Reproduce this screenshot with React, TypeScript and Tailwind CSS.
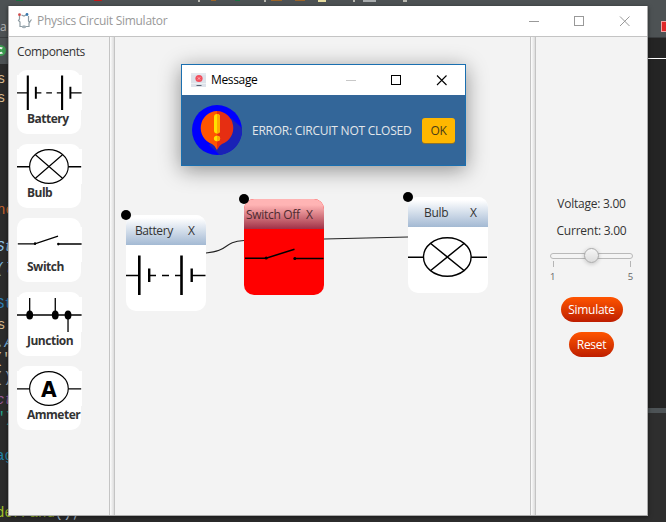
import React from "react";
import clsx from "clsx";

type Kind = "battery" | "bulb" | "switch" | "junction" | "ammeter";

/* Schematic symbol on an 80x40 grid, stretched to the size of its box. */
function Schematic({ kind, className }: { kind: Kind; className?: string }) {
  return (
    <svg
      viewBox="0 0 80 40"
      preserveAspectRatio="none"
      className={clsx("block shrink-0", className)}
      fill="none"
      stroke="#000"
      strokeWidth={1.4}
    >
      {kind === "battery" && (
        <>
          <path d="M0 20.5H12.5M23 20.5H30M36 20.5H43M49 20.5H55M66 20.5H79.5" />
          <path d="M13.3 .5V40M55.5 .5V40" strokeWidth={2.6} />
          <path d="M23.2 13.5V27M65.7 13.5V27" strokeWidth={2.4} />
        </>
      )}
      {kind === "bulb" && (
        <>
          <ellipse cx="39.3" cy="20" rx="23.8" ry="19.3" />
          <path d="M0 20.3H15.5M63.1 20.3H79M22.7 6.5L56 33.5M56 6.5L22.7 33.5" strokeWidth={1.5} />
        </>
      )}
      {kind === "switch" && (
        <>
          <path d="M1 19.2H22L50.5 10.3M50.5 19.4H79.5" strokeWidth={1.5} />
          <circle cx="22.2" cy="19" r="1.5" fill="#000" stroke="none" />
          <circle cx="50.8" cy="19.5" r="1.5" fill="#000" stroke="none" />
        </>
      )}
      {kind === "junction" && (
        <>
          <path d="M0 20.5H79.5" strokeWidth={1.8} />
          <path d="M15.6 1V20M47.1 1V20M62.8 20V40" strokeWidth={1.6} />
          <g fill="#000" stroke="none">
            <ellipse cx="15.6" cy="20.5" rx="4.2" ry="5.2" />
            <ellipse cx="47.1" cy="20.5" rx="4.2" ry="5.2" />
            <ellipse cx="62.8" cy="20.5" rx="4.2" ry="5.2" />
          </g>
        </>
      )}
      {kind === "ammeter" && (
        <>
          <ellipse cx="39.3" cy="20" rx="23.8" ry="19.3" />
          <path d="M0 20.3H15.5M63.1 20.3H79" />
          <text
            x="39.3"
            y="29.3"
            textAnchor="middle"
            fill="#000"
            stroke="none"
            fontSize="25"
            fontWeight="700"
            fontFamily="DejaVu Sans, sans-serif"
          >
            A
          </text>
        </>
      )}
    </svg>
  );
}

const palette: { kind: Kind; label: string }[] = [
  { kind: "battery", label: "Battery" },
  { kind: "bulb", label: "Bulb" },
  { kind: "switch", label: "Switch" },
  { kind: "junction", label: "Junction" },
  { kind: "ammeter", label: "Ammeter" },
];

function PaletteCard({ kind, label }: { kind: Kind; label: string }) {
  return (
    <div className="h-16 w-16 rounded-[10px] bg-white">
      <div className={clsx("w-[65px]", kind === "switch" ? "pt-[9px]" : "pt-[5px]")}>
        <Schematic kind={kind} className="h-[35px] w-[65px] bg-white" />
      </div>
      <div
        className={clsx(
          "pl-2.5 text-[12px] leading-4 font-bold tracking-[-0.5px] text-[#333]",
          kind === "switch" ? "-mt-[3px]" : "mt-px"
        )}
      >
        {label}
      </div>
    </div>
  );
}

function Divider() {
  return (
    <div className="w-1.5 shrink-0 border-x border-[#c4c4c4] bg-linear-to-r from-[#fdfdfd] to-[#dcdcdc]" />
  );
}

interface NodeProps {
  kind: Kind;
  label: string;
  place: string;
  labelClass: string;
  off?: boolean;
}

/* A component placed on the circuit canvas, with its drag handle. */
function CircuitNode({ kind, label, place, labelClass, off }: NodeProps) {
  return (
    <div className={clsx("absolute h-24 w-20", place)}>
      <div className={clsx("h-full w-full overflow-hidden rounded-[10px]", off ? "bg-[#ff0000]" : "bg-white")}>
        <div
          className={clsx(
            "flex h-[30px] items-center bg-linear-to-b pt-0.5 text-[12px] tracking-[-0.3px]",
            off
              ? "from-[#ffb4b4] from-20% to-[#a03048] text-[#4d2a30]"
              : "from-white from-10% to-[#a3b9d3] text-[#333]"
          )}
        >
          <span className={labelClass}>{label}</span>
          <span>X</span>
        </div>
        <Schematic kind={kind} className="mt-2.5 h-10 w-20" />
      </div>
      <span className="absolute -top-[5px] -left-[5px] size-2.5 rounded-full bg-black" />
    </div>
  );
}

function AlertIcon() {
  return (
    <svg viewBox="0 0 50 50" className="size-[50px] shrink-0">
      <circle cx="25" cy="25" r="25" fill="#0000fe" />
      <path d="M39 13L50 23A25 25 0 0 1 28 50L17 40Z" fill="#1a22b5" />
      <path d="M25 6A17 17 0 0 0 20 39Q23 40.5 25 45Z" fill="#ff5500" />
      <path d="M25 6A17 17 0 0 1 30 39Q27 40.5 25 45Z" fill="#e62e12" />
      <rect x="22" y="9" width="6" height="19.5" rx="3" fill="#ffe000" />
      <path d="M25 9a3 3 0 0 1 3 3v13.500a3 3 0 0 1-3 3z" fill="#ffaa00" />
      <ellipse cx="25" cy="33.500" rx="3.100" ry="2.700" fill="#ffe000" />
      <path d="M25 30.800a3.100 2.700 0 0 1 0 5.400z" fill="#ffaa00" />
    </svg>
  );
}

function MessageDialog() {
  return (
    <div className="absolute top-16 left-[181px] flex h-[102px] w-[285px] flex-col border border-[#1a6fb0] bg-[#336699] shadow-[0_4px_20px_rgba(0,0,0,0.42)]">
      <div className="flex h-[30px] items-center bg-white pl-[9px]">
        <svg viewBox="0 0 15 14" className="-mt-px h-3.5 w-[15px]">
          <path d="M0 0H15V14H0Z" fill="#dde2ea" />
          <path d="M0 1H15M0 10.500H15" stroke="#edf0f4" />
          <circle cx="8" cy="5.500" r="3.600" fill="#f2505e" />
          <path d="M6.800 4.300L9.200 6.700M9.200 4.300L6.800 6.700" stroke="#ffc4c8" strokeWidth=".8" />
          <path d="M5.500 12.500H10.500" stroke="#596574" />
        </svg>
        <span className="ml-[5px] text-[12px] tracking-[-0.35px] text-black">Message</span>
        <svg viewBox="0 0 102 12" className="-mt-px mr-[17px] ml-auto h-3 w-[102px]" fill="none" stroke="#000">
          <path d="M0 6.500H10" stroke="#c8c8c8" />
          <rect x="45.500" y="1.500" width="9" height="9" />
          <path d="M91 1.500L100.500 11M100.500 1.500L91 11" strokeWidth="1.100" />
        </svg>
      </div>
      <div className="flex flex-1 items-center pl-2.5">
        <AlertIcon />
        <span className="mt-0.5 ml-2.5 w-[160px] text-[12px] tracking-[-0.24px] whitespace-nowrap text-[#e3e7ea]">
          ERROR: CIRCUIT NOT CLOSED
        </span>
        <button className="ml-2.5 h-[25px] w-[33px] rounded-[3px] bg-[#ffb700] pt-px text-[12px] tracking-[-0.3px] text-[#4a3c18] shadow-[0_1px_0_#8a7030]">
          OK
        </button>
      </div>
    </div>
  );
}

const codeScraps: { text: string; cls: string }[] = [
  { text: "s", cls: "top-[71px] -left-[3px] text-[#d9b98c]" },
  { text: "s", cls: "top-[90px] -left-[3px] text-[#d9b98c]" },
  { text: "ne", cls: "top-[202px] -left-[3px] text-[#c8622b]" },
  { text: "St", cls: "top-[239px] -left-[4px] italic text-[#8fc3e8]" },
  { text: "(l", cls: "top-[261px] -left-[4px] italic text-[#79b4dd]" },
  { text: "St", cls: "top-[296px] -left-[4px] text-[#2d7fb8]" },
  { text: "s", cls: "top-[317px] -left-[3px] text-[#d9b98c]" },
  { text: ".A", cls: "top-[335px] -left-[4px] italic text-[#79b4dd]" },
  { text: "(\"", cls: "top-[351px] -left-[5px] text-[#d9c9a8]" },
  { text: "()", cls: "top-[370px] -left-[5px] text-[#a9b7c6]" },
  { text: "ct", cls: "top-[392px] -left-[4px] italic text-[#9a5a9a]" },
  { text: "\")", cls: "top-[410px] -left-[4px] text-[#21a58c]" },
  { text: "ag", cls: "top-[448px] -left-[4px] text-[#2384a8]" },
];

/* The IDE that lies behind the simulator window. */
function EditorBackdrop() {
  return (
    <div className="flex h-full flex-col font-['Liberation_Mono',monospace]">
      <div className="h-[38px] border-b border-[#3a3d3f] bg-[#4d5254]" />
      <div className="flex flex-1">
        <div className="flex w-80 flex-col bg-[#2b2b2b]">
          <div className="h-[26px] bg-[#4d5254]" />
        </div>
        <div className="flex flex-1 flex-col bg-[#2e2e2e]">
          <div className="h-[21px] border-b border-white bg-[#242424]" />
          <div className="h-[349px] bg-[#242424]" />
          <div className="h-[5px] bg-[#4d5356]" />
        </div>
      </div>
      <span className="absolute top-[19px] left-0 font-['Open_Sans',sans-serif] text-[12px] leading-4 text-[#b5b5b5]">a</span>
      <span className="absolute top-[45px] -left-[5px] flex size-[11px] items-center justify-center rounded-full bg-[#3d9a50]">
        <span className="size-[7px] rounded-full border-2 border-r-[#3d9a50] border-[#e8f3ea]" />
      </span>
      {codeScraps.map((s, i) => (
        <span key={i} className={clsx("absolute text-[14px] leading-4", s.cls)}>{s.text}</span>
      ))}
      <span className="absolute top-[505px] -left-[4px] text-[14px] leading-4 whitespace-nowrap text-[#a2c22a]">
        derPand<span className="text-[#a9bfd6]">();</span>
      </span>
      <svg viewBox="0 0 666 2" className="absolute top-0 left-0 h-0.5 w-[666px]">
        <path d="M16 0h7v1h-7zM235 0h5v1h-5z" fill="#1c7040" />
        <path d="M94 0h8v1h-8z" fill="#c01818" />
        <path d="M198 0h2v2h-2zM264 0h2v2h-2zM353 0h2v2h-2zM403 0h4v2h-4z" fill="#b8b8b0" />
        <path d="M211 0h5v1h-5zM271 0h11v1h-11zM295 0h10v1h-10z" fill="#9a6428" />
        <path d="M318 0h8v2h-8z" fill="#e6dca0" />
        <path d="M363 0h13v2h-13z" fill="#a8acae" />
      </svg>
      <span className="absolute top-[21px] left-[661px] h-[11px] w-2.5 border border-[#f0a0a0] bg-[#e02828]" />
    </div>
  );
}

function WindowTitle() {
  return (
    <div className="flex h-[30px] shrink-0 items-center bg-white pl-2">
      <svg viewBox="0 0 16 16" className="size-4" fill="none" stroke="#8e9ca3" strokeWidth="1.200">
        <path d="M2.500 3V6L1.500 7.500L3 9V13.500H12V10L14.500 6.500M4.500 2L7 3L9 2M11.500 3V8L13 10" />
        <ellipse cx="7" cy="13.700" rx="2.200" ry="1.500" fill="#a4b1b8" stroke="none" />
        <circle cx="2.500" cy="1.700" r="1.400" fill="#cf4a4a" stroke="none" />
        <circle cx="10" cy="1.500" r="1.400" fill="#3678ad" stroke="none" />
      </svg>
      <span className="ml-1 text-[12px] tracking-[-0.27px] text-[#999]">Physics Circuit Simulator</span>
      <svg viewBox="0 0 102 12" className="-mt-px mr-4 ml-auto h-3 w-[102px]" fill="none" stroke="#999">
        <path d="M0 6.500H10" />
        <rect x="45.500" y="1.500" width="9" height="9" />
        <path d="M91 1.500L100.500 11M100.500 1.500L91 11" />
      </svg>
    </div>
  );
}

const pill =
  "rounded-full bg-linear-to-b from-[#ff5400] to-[#be1d00] text-[12px] tracking-[-0.3px] text-white h-[25px]";

function Controls() {
  return (
    <div className="flex flex-1 flex-col items-center pt-[158px] text-[12px] tracking-[-0.25px] text-[#333]">
      <div className="leading-[18px]">Voltage: 3.00</div>
      <div className="mt-[9px] leading-[18px]">Current: 3.00</div>
      <div className="mt-2 flex h-[15px] w-[83px] items-center justify-center rounded-full">
        <div className="flex h-[6px] w-full items-center justify-center rounded-full border border-[#b9b9b9] bg-[#f4f4f4]">
          <div className="size-[15px] shrink-0 rounded-full border border-[#a8a8a8] bg-linear-to-b from-[#f6f6f6] to-[#dcdcdc] shadow-[0_1px_4px_rgba(0,0,0,0.2)]" />
        </div>
      </div>
      <div className="-mt-[2px] flex h-1.5 w-[78px] border-x border-[#b5b5b5]" />
      <div className="mt-[3px] flex w-[83px] justify-between text-[9.5px] leading-[14px] text-[#666]">
        <span>1</span>
        <span>5</span>
      </div>
      <button className={clsx(pill, "mt-[13px] w-[62px]")}>Simulate</button>
      <button className={clsx(pill, "mt-2.5 w-[45px]")}>Reset</button>
    </div>
  );
}

export default function App() {
  return (
    <div className="relative h-[522px] w-[666px] overflow-hidden bg-[#2b2b2b] font-['Open_Sans',sans-serif]">
      <EditorBackdrop />
      <div className="absolute top-1.5 left-2 flex h-[510px] w-[640px] flex-col border-r border-b border-l border-[#aaa] bg-white shadow-[0_1px_4px_rgba(0,0,0,0.5)]">
        <WindowTitle />
        <div className="flex flex-1 border-t border-[#c4c4c4] bg-[#f3f3f3]">
          <div className="w-[100px] pt-1.5 pl-2">
            <div className="mb-[9px] text-[12px] leading-[18px] tracking-[-0.4px] text-[#333]">Components</div>
            <div className="flex flex-col gap-2.5">
              {palette.map((p) => (
                <PaletteCard key={p.kind} {...p} />
              ))}
            </div>
          </div>
          <Divider />
          <div className="relative w-[415px]">
            <svg viewBox="0 0 415 478" className="block h-[478px] w-[415px]" fill="none" stroke="#222" strokeWidth="1.100">
              <path d="M91 216C115 214 107 205 129 203.500" />
              <path d="M209 202L293 200" />
            </svg>
            <CircuitNode kind="battery" label="Battery" place="top-[178px] left-[11px]" labelClass="w-[53px] ml-[9px] tracking-[-0.4px]" />
            <CircuitNode kind="switch" label="Switch Off" place="top-[162px] left-[129px]" labelClass="w-[60px] ml-0.5 whitespace-nowrap" off />
            <CircuitNode kind="bulb" label="Bulb" place="top-[160px] left-[293px]" labelClass="w-[46px] ml-4" />
          </div>
          <Divider />
          <Controls />
        </div>
      </div>
      <MessageDialog />
    </div>
  );
}
